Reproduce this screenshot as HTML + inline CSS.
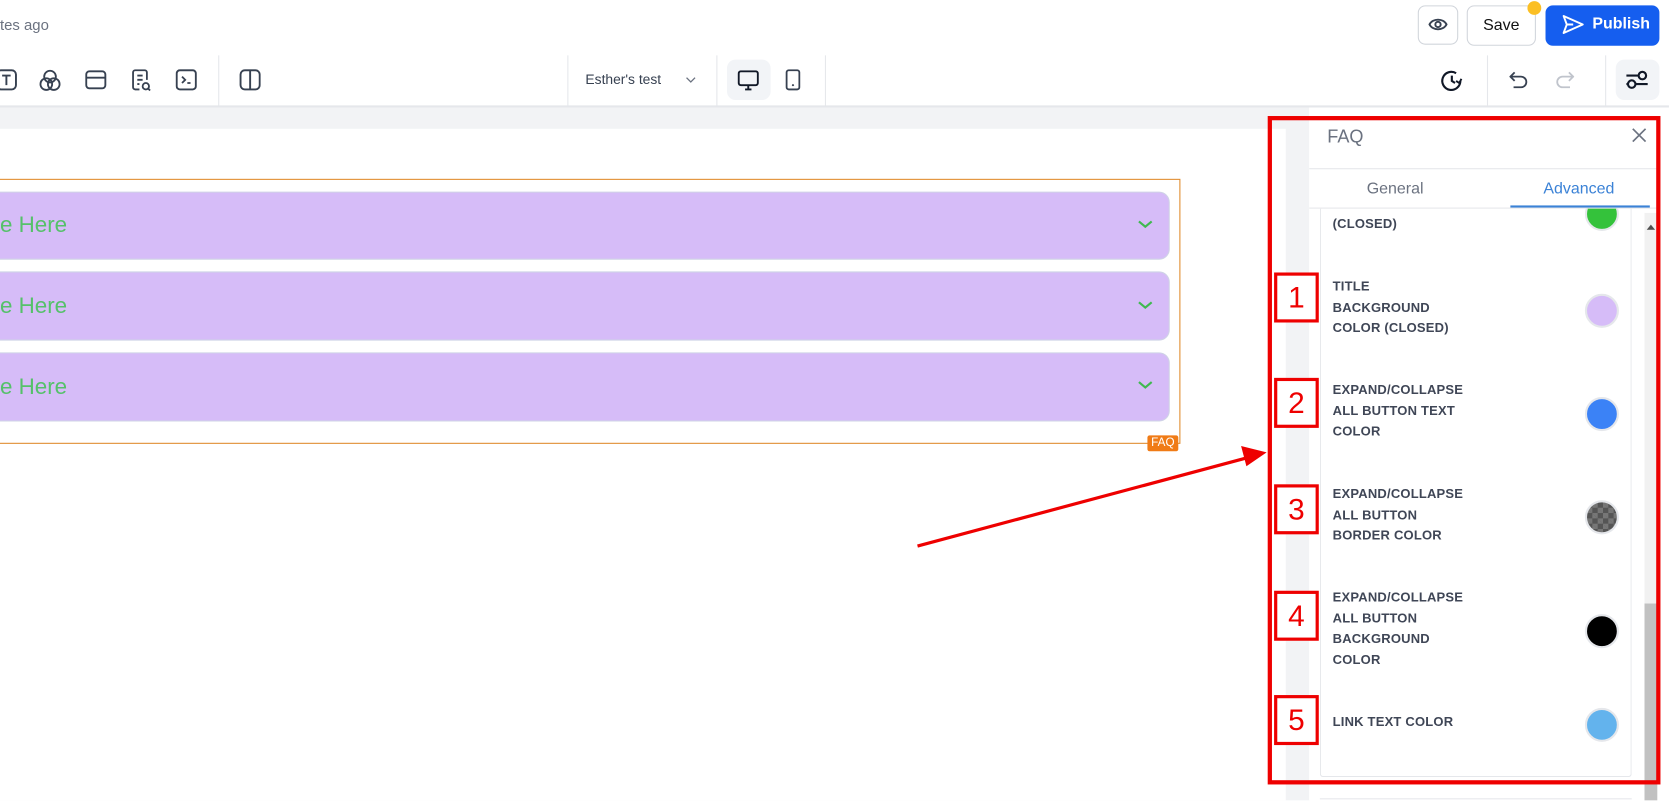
<!DOCTYPE html>
<html><head><meta charset="utf-8"><style>
*{margin:0;padding:0;box-sizing:border-box}
html,body{width:1669px;height:801px;overflow:hidden}
body{background:#fff;font-family:"Liberation Sans",sans-serif;position:relative}
#w{position:absolute;left:0;top:0;width:1568px;height:752px;transform:scale(1.0644);transform-origin:0 0;overflow:hidden}
.a{position:absolute}
.vd{position:absolute;width:1px;background:#e5e7eb;top:52px;height:48px}
.ic{position:absolute;top:65px}
.lbl{position:absolute;left:1252px;font-size:12.2px;font-weight:bold;color:#3f4656;line-height:19.5px;letter-spacing:.2px}
.dot{position:absolute;left:1489px;width:32px;height:32px;border-radius:50%;border:2px solid #e5e7eb}
.num{position:absolute;left:1197px;width:42px;height:47px;border:3px solid #e00;background:#fff;color:#e00;font-size:28px;text-align:center;line-height:41px;font-family:"Liberation Sans",sans-serif}
.acc{position:absolute;left:-10px;width:1109px;background:#d6bcf8;border-radius:10px;border:1px solid #cfd3e6;color:#55c16a;font-size:21px}
.acc span{position:absolute;left:9px}
</style></head><body><div id="w">
<div class="a" style="left:0;top:15px;font-size:14px;color:#6b7280">tes ago</div>
<div class="a" style="left:1332px;top:5px;width:38px;height:37px;border:1px solid #d1d5db;border-radius:7px"></div>
<svg class="a" style="left:1342px;top:15px" width="18" height="16" viewBox="0 0 18 16"><path d="M1 8C4 2 14 2 17 8C14 14 4 14 1 8Z" fill="none" stroke="#374151" stroke-width="1.8"/><circle cx="9" cy="8" r="2.5" fill="none" stroke="#374151" stroke-width="1.8"/></svg>
<div class="a" style="left:1378px;top:5px;width:65px;height:38px;border:1px solid #d1d5db;border-radius:7px;font-size:15px;color:#111;text-align:center;line-height:36px">Save</div>
<div class="a" style="left:1435px;top:1px;width:13px;height:13px;border-radius:50%;background:#fbbf24"></div>
<div class="a" style="left:1452px;top:5px;width:107px;height:38px;background:#155eef;border-radius:7px;color:#fff;font-size:15px;font-weight:bold;line-height:36px;padding-left:44px">Publish</div>
<svg class="a" style="left:1467px;top:13px" width="22" height="20" viewBox="0 0 22 20"><path d="M2 2L20 10L2 18L5 10Z M5 10H11" fill="none" stroke="#fff" stroke-width="1.8" stroke-linejoin="round"/></svg>
<div class="a" style="left:0;top:99px;width:1568px;height:2px;background:#e5e7eb"></div>
<svg class="ic" style="left:-4px" width="20" height="20" viewBox="0 0 20 20"><rect x="1" y="1" width="18" height="18" rx="4" fill="none" stroke="#374151" stroke-width="1.8"/><path d="M6 6H14M10 6V15" stroke="#374151" stroke-width="1.8"/></svg>
<svg class="ic" style="left:37px" width="20" height="22" viewBox="0 0 20 22"><circle cx="10" cy="7" r="5.5" fill="none" stroke="#374151" stroke-width="1.7"/><circle cx="6.5" cy="14" r="5.5" fill="none" stroke="#374151" stroke-width="1.7"/><circle cx="13.5" cy="14" r="5.5" fill="none" stroke="#374151" stroke-width="1.7"/></svg>
<svg class="ic" style="left:80px" width="20" height="20" viewBox="0 0 20 20"><rect x="1" y="2" width="18" height="16" rx="3" fill="none" stroke="#374151" stroke-width="1.8"/><path d="M1 8H19" stroke="#374151" stroke-width="1.8"/></svg>
<svg class="ic" style="left:123px" width="20" height="22" viewBox="0 0 20 22"><path d="M8 19H4a2 2 0 0 1-2-2V3a2 2 0 0 1 2-2h9a2 2 0 0 1 2 2v7M6 6H11M6 10H11M6 14H8" fill="none" stroke="#374151" stroke-width="1.7"/><circle cx="14" cy="16" r="3" fill="none" stroke="#374151" stroke-width="1.7"/><path d="M16 18L18 20" stroke="#374151" stroke-width="1.7"/></svg>
<svg class="ic" style="left:165px" width="20" height="20" viewBox="0 0 20 20"><rect x="1" y="1" width="18" height="18" rx="3" fill="none" stroke="#374151" stroke-width="1.8"/><path d="M6 7L9 10L6 13M11 13H14" fill="none" stroke="#374151" stroke-width="1.7"/></svg>
<div class="vd" style="left:205px"></div>
<svg class="ic" style="left:225px" width="20" height="20" viewBox="0 0 20 20"><rect x="1" y="1" width="18" height="18" rx="4" fill="none" stroke="#374151" stroke-width="1.8"/><path d="M10 1V19" stroke="#374151" stroke-width="1.8"/></svg>
<div class="vd" style="left:533px"></div>
<div class="a" style="left:550px;top:67px;font-size:13px;color:#374151">Esther's test</div>
<svg class="a" style="left:644px;top:72px" width="10" height="6"><path d="M1 1L5 5L9 1" fill="none" stroke="#6b7280" stroke-width="1.2"/></svg>
<div class="vd" style="left:673px"></div>
<div class="a" style="left:683px;top:56px;width:41px;height:38px;background:#f2f4f7;border-radius:8px"></div>
<svg class="a" style="left:693px;top:66px" width="20" height="20" viewBox="0 0 20 20"><rect x="1" y="1" width="18" height="13" rx="2" fill="none" stroke="#111827" stroke-width="1.8"/><path d="M7 18H13M10 14V18" stroke="#111827" stroke-width="1.8"/></svg>
<svg class="a" style="left:738px;top:65px" width="14" height="20" viewBox="0 0 14 20"><rect x="1" y="1" width="12" height="18" rx="2" fill="none" stroke="#374151" stroke-width="1.7"/><circle cx="7" cy="15" r="1" fill="#374151"/></svg>
<div class="vd" style="left:775px"></div>
<svg class="a" style="left:1353px;top:65px" width="22" height="22" viewBox="0 0 22 22"><path d="M19 11A8.5 8.5 0 1 1 15 3.8M11 6V11L14 13" fill="none" stroke="#111827" stroke-width="2"/><path d="M20 9L18 13L15 11" fill="none" stroke="#111827" stroke-width="1.8"/></svg>
<div class="vd" style="left:1397px"></div>
<svg class="a" style="left:1418px;top:66px" width="18" height="18" viewBox="0 0 18 18"><path d="M5 2L1 6L5 10M1 6H11A5 5 0 0 1 11 16H4" fill="none" stroke="#374151" stroke-width="1.7"/></svg>
<svg class="a" style="left:1461px;top:66px" width="18" height="18" viewBox="0 0 18 18"><path d="M13 2L17 6L13 10M17 6H7A5 5 0 0 0 7 16H14" fill="none" stroke="#c0c4cc" stroke-width="1.7"/></svg>
<div class="vd" style="left:1508px"></div>
<div class="a" style="left:1518px;top:56px;width:41px;height:38px;background:#f2f4f7;border-radius:8px"></div>
<svg class="a" style="left:1527px;top:66px" width="22" height="18" viewBox="0 0 22 18"><path d="M1 5H12M1 13H10" stroke="#111827" stroke-width="2"/><circle cx="16" cy="5" r="3.5" fill="none" stroke="#111827" stroke-width="2"/><circle cx="6" cy="13" r="3.5" fill="#f2f4f7" stroke="#111827" stroke-width="2"/><path d="M10 13H21" stroke="#111827" stroke-width="2"/></svg>
<div class="a" style="left:0;top:101px;width:1230px;height:651px;background:#f2f3f5"></div>
<div class="a" style="left:0;top:121px;width:1208px;height:631px;background:#fff"></div>
<div class="a" style="left:-2px;top:168px;width:1111px;height:249px;border:1px solid #e08a2c"></div>
<div class="acc" style="top:180px;height:64px;line-height:62px"><span>e Here</span></div>
<div class="acc" style="top:255px;height:65px;line-height:63px"><span>e Here</span></div>
<div class="acc" style="top:331px;height:65px;line-height:63px"><span>e Here</span></div>
<svg class="a" style="left:1069px;top:207px" width="14" height="8"><path d="M1 1L7 6L13 1" fill="none" stroke="#3fb950" stroke-width="2"/></svg>
<svg class="a" style="left:1069px;top:283px" width="14" height="8"><path d="M1 1L7 6L13 1" fill="none" stroke="#3fb950" stroke-width="2"/></svg>
<svg class="a" style="left:1069px;top:358px" width="14" height="8"><path d="M1 1L7 6L13 1" fill="none" stroke="#3fb950" stroke-width="2"/></svg>
<div class="a" style="left:1078px;top:409px;width:29px;height:15px;background:#f07b16;border-radius:2px;color:#fff;font-size:11px;text-align:center;line-height:15px">FAQ</div>
<div class="a" style="left:1230px;top:101px;width:338px;height:651px;background:#fff"></div>
<div class="a" style="left:1247px;top:119px;font-size:17px;color:#6b7280">FAQ</div>
<svg class="a" style="left:1533px;top:120px" width="14" height="14"><path d="M1 1L13 13M13 1L1 13" stroke="#6b7280" stroke-width="1.6"/></svg>
<div class="a" style="left:1230px;top:158px;width:330px;height:1px;background:#e5e7eb"></div>
<div class="a" style="left:1284px;top:169px;font-size:15px;color:#6b7280">General</div>
<div class="a" style="left:1450px;top:169px;font-size:15px;color:#3b82d6">Advanced</div>
<div class="a" style="left:1230px;top:195px;width:330px;height:1px;background:#e5e7eb"></div>
<div class="a" style="left:1419px;top:193px;width:131px;height:2px;background:#3b82d6"></div>
<div class="a" style="left:1240px;top:196px;width:293px;height:534px;border:1px solid #e5e7eb;border-top:none;border-radius:0 0 3px 3px"></div>
<div class="a" style="left:1545px;top:200px;width:12px;height:552px;background:#f1f1f1"></div>
<div class="a" style="left:1545px;top:567px;width:12px;height:185px;background:#c1c1c1"></div>
<svg class="a" style="left:1547px;top:210px" width="8" height="6"><path d="M0 6L4 1L8 6Z" fill="#505050"/></svg>
<div class="a" style="left:1489px;top:196px;width:32px;height:23px;overflow:hidden"><div style="position:absolute;top:-11px;width:32px;height:32px;border-radius:50%;background:#34c23b;border:2px solid #e5e7eb"></div></div>
<div class="lbl" style="top:201px">(CLOSED)</div>
<div class="lbl" style="top:260px">TITLE<br>BACKGROUND<br>COLOR (CLOSED)</div>
<div class="dot" style="top:276px;background:#d6bcf8"></div>
<div class="lbl" style="top:357px">EXPAND/COLLAPSE<br>ALL BUTTON TEXT<br>COLOR</div>
<div class="dot" style="top:373px;background:#3b82f6"></div>
<div class="lbl" style="top:455px">EXPAND/COLLAPSE<br>ALL BUTTON<br>BORDER COLOR</div>
<div class="dot" style="top:470px;background-color:#555;background-image:linear-gradient(45deg,#777 25%,transparent 25%,transparent 75%,#777 75%),linear-gradient(45deg,#777 25%,transparent 25%,transparent 75%,#777 75%);background-size:10px 10px;background-position:0 0,5px 5px"></div>
<div class="lbl" style="top:552px">EXPAND/COLLAPSE<br>ALL BUTTON<br>BACKGROUND<br>COLOR</div>
<div class="dot" style="top:577px;background:#000"></div>
<div class="lbl" style="top:669px">LINK TEXT COLOR</div>
<div class="dot" style="top:665px;background:#63b3ed"></div>
<div class="a" style="left:1240px;top:750px;width:293px;height:1px;background:#e5e7eb"></div>
<div class="a" style="left:1191px;top:109px;width:369px;height:628px;border:4px solid #e00"></div>
<div class="num" style="top:256px">1</div>
<div class="num" style="top:355px">2</div>
<div class="num" style="top:455px">3</div>
<div class="num" style="top:555px">4</div>
<div class="num" style="top:653px">5</div>
<svg class="a" style="left:0;top:0" width="1568" height="752"><line x1="862" y1="513" x2="1172" y2="430" stroke="#e00" stroke-width="3"/><path d="M1190 425L1166 419L1171 438Z" fill="#e00"/></svg>
</div></body></html>
